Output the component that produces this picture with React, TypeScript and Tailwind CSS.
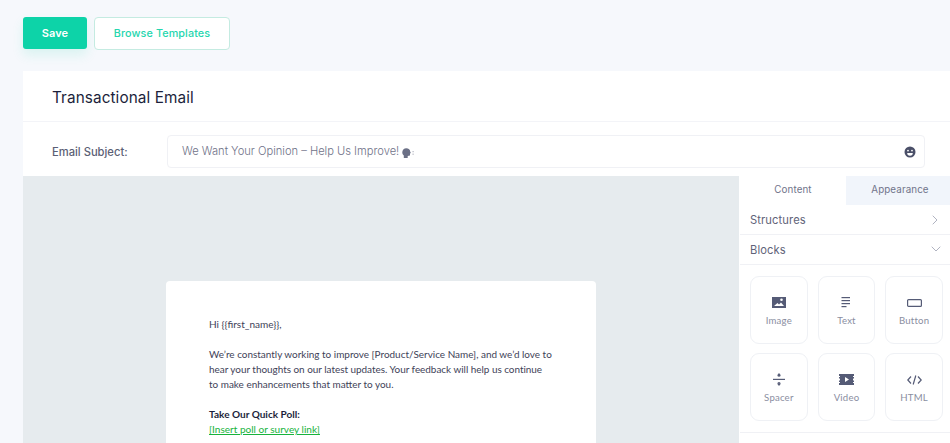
import React from 'react';
import { ChevronDown, ChevronRight } from 'lucide-react';

const ImageIcon = () => (
    <svg width="14" height="11" viewBox="0 0 14 11" fill="#555b76">
        <path fillRule="evenodd" d="M0 0h14v11H0z M2 9h10L9 5.5 7 7.5 5.5 6z M9.5 1.5a1.3 1.3 0 1 0 0 2.6 1.3 1.3 0 0 0 0-2.6z" />
    </svg>
);

const TextIcon = () => (
    <svg width="10" height="11" viewBox="0 0 10 11" fill="#555b76">
        <rect x="0.5" y="0" width="8.5" height="1.2" />
        <rect x="0.5" y="3" width="8.5" height="1.2" />
        <rect x="0.5" y="6" width="8.5" height="1.2" />
        <rect x="0.5" y="9" width="5" height="1.2" />
    </svg>
);

const ButtonIcon = () => (
    <svg width="15" height="8" viewBox="0 0 15 8" fill="none" stroke="#555b76" strokeWidth="1.2">
        <rect x="0.6" y="0.6" width="13.8" height="6.8" rx="1" />
    </svg>
);

const SpacerIcon = () => (
    <svg width="12" height="13" viewBox="0 0 12 13" fill="#555b76">
        <path d="M6 0l2 2.5H4z" />
        <rect x="4.8" y="2" width="2.4" height="1.6" />
        <rect x="0" y="5.8" width="12" height="1.2" />
        <rect x="4.8" y="9.2" width="2.4" height="1.6" />
        <path d="M6 13l2-2.5H4z" />
    </svg>
);

const VideoIcon = () => (
    <svg width="15" height="11" viewBox="0 0 15 11" fill="#555b76">
        <path fillRule="evenodd" d="M0 0h15v2h-1v1h1v1.5h-1v2h1V8h-1v1h1v2H0V9h1V8H0V6.5h1v-2H0V3h1V2H0z M6 3v5l4-2.5z" />
    </svg>
);

const HtmlIcon = () => (
    <svg width="15" height="10" viewBox="0 0 15 10" fill="none" stroke="#555b76" strokeWidth="1.2">
        <path d="M4 1.5L0.8 5 4 8.5M11 1.5L14.2 5 11 8.5M8.8 0.5L6.2 9.5" />
    </svg>
);

const SmileIcon = () => (
    <svg width="12" height="12" viewBox="0 0 12 12">
        <circle cx="6" cy="6" r="5.5" fill="#4a4f68" />
        <circle cx="4" cy="4.6" r="0.9" fill="#fff" />
        <circle cx="8" cy="4.6" r="0.9" fill="#fff" />
        <path d="M3.2 7h5.6A2.8 2.8 0 0 1 3.2 7z" fill="#fff" />
    </svg>
);

const SpeakingHead = () => (
    <svg width="13" height="10" viewBox="0 0 13 10" fill="#6b7086" className="ml-[3px] mt-[2px]">
        <path d="M4.2 0.2c2.5 0 4 1.5 4 3.5l0.7 1.4-0.9 0.4v1.5c0 0.5-0.5 0.9-1.3 0.8l-1 0.1v2H1.8V7.5C0.7 6.6 0.2 5.4 0.3 4 0.5 1.8 2.1 0.2 4.2 0.2z" />
        <rect x="10.5" y="3" width="1.2" height="1.2" opacity="0.5" />
        <rect x="10.5" y="5.6" width="1.2" height="1.2" opacity="0.5" />
    </svg>
);

const blocks = [
    { label: 'Image', icon: <ImageIcon /> },
    { label: 'Text', icon: <TextIcon /> },
    { label: 'Button', icon: <ButtonIcon /> },
    { label: 'Spacer', icon: <SpacerIcon /> },
    { label: 'Video', icon: <VideoIcon /> },
    { label: 'HTML', icon: <HtmlIcon /> },
];

const BlockTile: React.FC<{ label: string; icon: React.ReactNode }> = ({ label, icon }) => (
    <div className="h-[68px] rounded-[9px] border border-[#eff1f5] bg-white flex flex-col items-center">
        <div className="h-[13px] mt-[19px] flex items-center justify-center">{icon}</div>
        <span className="mt-[6px] font-['Lato',sans-serif] text-[9.6px] leading-[12px] tracking-[0.2px] text-[#8a8e9f]">{label}</span>
    </div>
);

const App: React.FC = () => {
    return (
        <div className="w-[950px] h-[443px] overflow-hidden bg-[#f6f8fc] pl-[23px] pt-[17px] font-['Inter',sans-serif]">
            <div className="flex gap-[7px]">
                <button className="w-[64px] h-[32px] rounded-[3px] bg-[#0dd3a8] text-white text-[11px] font-semibold tracking-[0.1px] shadow-[0_6px_12px_rgba(13,211,168,0.12)]">
                    Save
                </button>
                <button className="w-[136px] h-[33px] pt-px rounded-[4px] border border-[#c4ebe1] bg-white text-[#25d6ae] text-[10.8px] font-medium tracking-[0.1px]">
                    Browse Templates
                </button>
            </div>

            <div className="mt-[21px] bg-white h-[372px] flex flex-col">
                <div className="h-[51px] shrink-0 pl-[29px] pt-[18px] border-b border-[#f3f4f8]">
                    <h1 className="text-[15.3px] leading-[18px] font-normal text-[#1c1f3b] tracking-[0.1px]">Transactional Email</h1>
                </div>
                <div className="h-[54px] shrink-0 flex items-start pt-[13px] pl-[29px] pr-[25px]">
                    <label className="w-[115px] h-[33px] pt-px flex items-center shrink-0 text-[11.2px] font-medium text-[#5b5f75]">Email Subject:</label>
                    <div className="flex-1 h-[33px] rounded-[4px] border border-[#f0f1f5] flex items-center pl-[14px] pr-[8px]">
                        <span className="text-[11.15px] font-light text-[#6f7288]">We Want Your Opinion – Help Us Improve!</span>
                        <SpeakingHead />
                        <span className="ml-auto"><SmileIcon /></span>
                    </div>
                </div>

                <div className="flex-1 flex min-h-0">
                    <div className="w-[716px] shrink-0 bg-[#e6ebee] pt-[105px] pl-[143px]">
                        <div className="w-[430px] h-[200px] bg-white rounded-t-[4px] pt-[36px] pl-[43px] font-['Lato',sans-serif] text-[10.05px] leading-[15px] text-[#3e4258]">
                            <p>Hi {'{{first_name}}'},</p>
                            <p className="mt-[15px] whitespace-nowrap text-[9.95px]">
                                We’re constantly working to improve [Product/Service Name], and we’d love to
                                <br />
                                <span className="tracking-[-0.02px]">hear your thoughts on our latest updates. Your feedback will help us continue</span>
                                <br />
                                to make enhancements that matter to you.
                            </p>
                            <p className="mt-[15px] font-bold text-[#1c1f3b]">Take Our Quick Poll:</p>
                            <a className="text-[#17b33c] underline">[Insert poll or survey link]</a>
                        </div>
                    </div>

                    <div className="flex-1 ml-px">
                        <div className="flex h-[29px] pt-px text-[9.8px] tracking-[0.1px] text-[#70748a]">
                            <div className="w-[106px] -mt-px flex items-center justify-center">Content</div>
                            <div className="flex-1 -mt-px pl-[4px] flex items-center justify-center bg-[#f1f5fb]">Appearance</div>
                        </div>
                        <div className="h-[30px] pt-px flex items-center justify-between pl-[10px] pr-[7px] border-b border-[#f0f1f5] text-[11.2px] tracking-[0.1px] text-[#5f6379]">
                            Structures
                            <ChevronRight size={16} color="#b0b3c1" strokeWidth={1.5} />
                        </div>
                        <div className="h-[30px] pt-px flex items-center justify-between pl-[10px] pr-[6px] border-b border-[#f0f1f5] text-[11.2px] tracking-[0.1px] text-[#5f6379]">
                            Blocks
                            <ChevronDown size={16} color="#b0b3c1" strokeWidth={1.5} className="-mt-[3px]" />
                        </div>
                        <div className="h-[168px] border-b border-[#f0f1f5] pt-[11px] pl-[10px] pr-[7px] grid grid-cols-3 gap-x-[10px] gap-y-[9px] content-start">
                            {blocks.map(block => (
                                <BlockTile key={block.label} label={block.label} icon={block.icon} />
                            ))}
                        </div>
                    </div>
                </div>
            </div>
        </div>
    );
};

export default App;
